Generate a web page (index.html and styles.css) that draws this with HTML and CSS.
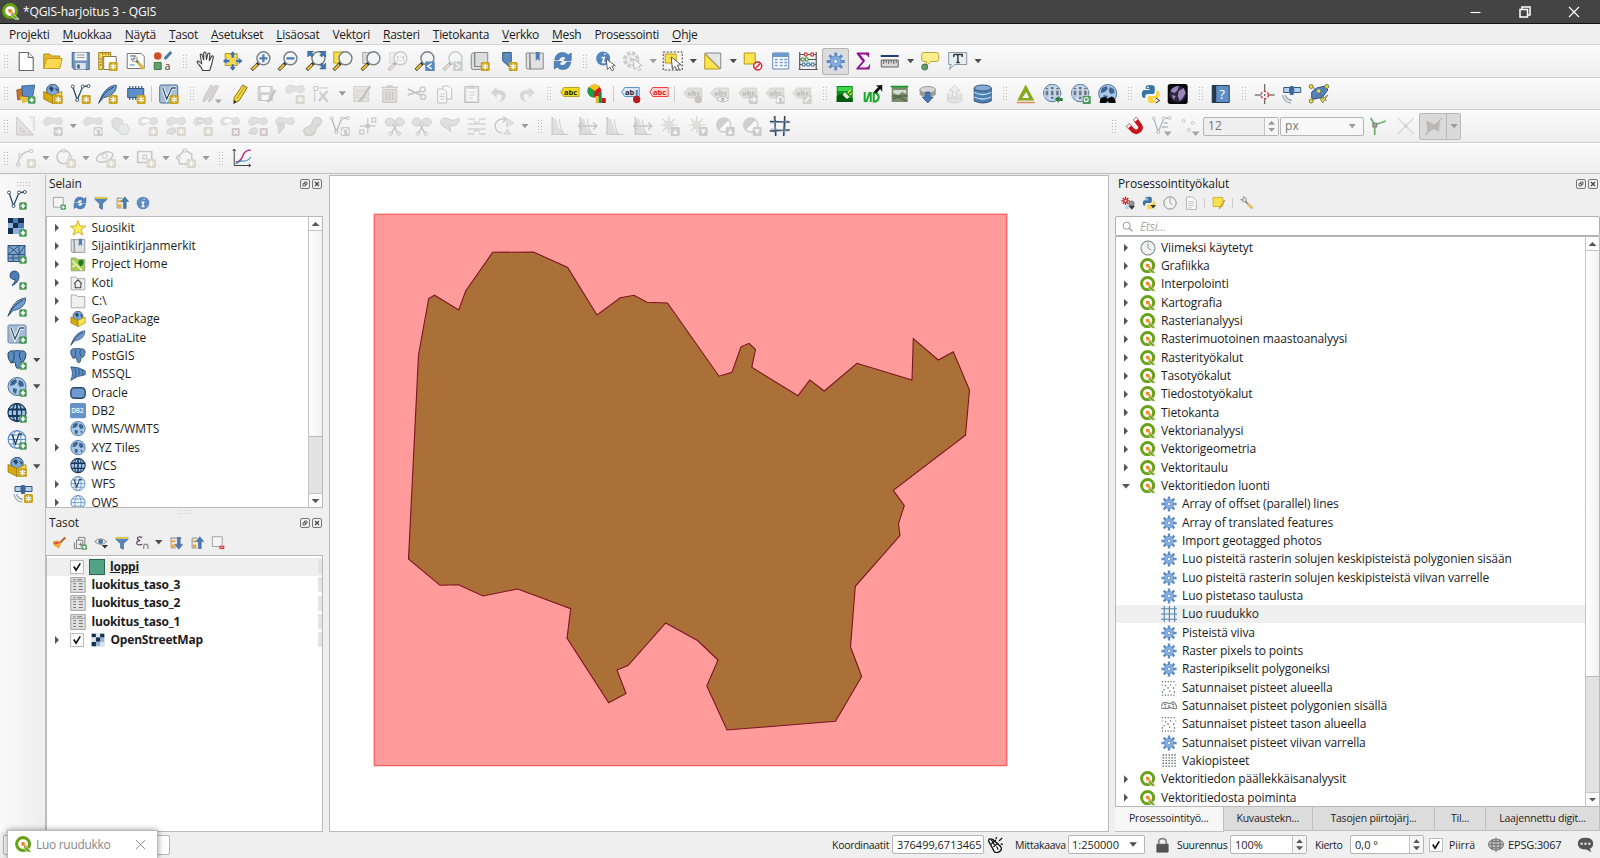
FILE: index.html
```html
<!DOCTYPE html>
<html lang="fi">
<head>
<meta charset="utf-8">
<title>*QGIS-harjoitus 3 - QGIS</title>
<link rel="stylesheet" href="styles.css">
</head>
<body>
<svg class="defs" width="0" height="0">
<defs>
<g id="bs"><rect x="11" y="11" width="9" height="9" rx="1.5" fill="#c9a21e"/><path d="M15.5 12.5v6M12.7 14l5.6 3M18.3 14l-5.6 3" stroke="#fff" stroke-width="1.3"/></g>
<g id="bp"><rect x="12.2" y="12.2" width="7.6" height="7.6" rx="1.5" fill="#4d9a5c"/><path d="M16 13.8v4.4M13.8 16h4.4" stroke="#fff" stroke-width="1.7"/></g>
<g id="bx"><rect x="12" y="12" width="8" height="8" rx="1" fill="#d66"/><path d="M14 14l4 4M18 14l-4 4" stroke="#fff" stroke-width="1.3"/></g>
<g id="ba"><rect x="11" y="11" width="9" height="9" rx="1.5" fill="#888"/><path d="M12.5 15.500h5M15.500 13l2.500 2.500-2.500 2.500" stroke="#fff" stroke-width="1.4" fill="none"/></g>
<g id="br"><rect x="11" y="11" width="9" height="9" rx="1.5" fill="#888"/><path d="M17.5 17.5a2.8 2.8 0 1 0-4 0M13.8 15.3v2.500h-2" stroke="#fff" stroke-width="1.3" fill="none"/></g>
<g id="up"><rect x="11" y="11" width="9" height="9" rx="1.5" fill="#888"/><path d="M15.5 13l2.6 5h-5.2z" fill="#fff"/></g>
<g id="dn"><rect x="11" y="11" width="9" height="9" rx="1.5" fill="#888"/><path d="M15.5 18.3l2.6-5h-5.2z" fill="#fff"/></g>
<g id="ptr"><path d="M10.5 8l1.2 10.5 2.4-2.3 2 3.6 2-1.1-2-3.5 3.4-.6z" fill="#fff" stroke="#555" stroke-width=".9"/></g>
<g id="blob"><path d="M1 5.5C1.500 1 6 .8 8.500 1.800S13 3 15.500 1.800 20 3 19.500 6 15 9.500 12.500 7.500 8 8 5.500 9 .8 8.500 1 5.500z" fill="#b4bab4" stroke="#8d948d" stroke-width=".8"/></g>
<g id="mag"><path d="M8 12L1 19" stroke="#333" stroke-width="3.200"/><path d="M6.500 13.500L1.500 18.500" stroke="#f2c02c" stroke-width="2"/><circle cx="12.700" cy="7.300" r="6.500" fill="#f3f5f5" stroke="#777f82" stroke-width="1.400"/></g>
<g id="vee"><path d="M2 2.500L6.500 16 12 2.500 17.500 2" fill="none" stroke="#2d4a63" stroke-width="1.300"/><g fill="#fff" stroke="#2d4a63" stroke-width=".9"><circle cx="2" cy="2.500" r="1.500"/><circle cx="6.500" cy="16" r="1.500"/><circle cx="12" cy="2.500" r="1.500"/><circle cx="17.800" cy="2" r="1.500"/></g></g>
<g id="feat"><path d="M1.500 18.500C4 10 9 2 18.500 1 19 6 16 12 6 13.500z" fill="#6e9bce" stroke="#33567c" stroke-width=".9"/><path d="M.8 19.500C4 12 9 6.500 16 3" stroke="#24405e" fill="none"/></g>
<g id="glb"><circle cx="10" cy="9.500" r="9" fill="#a9c7e6" stroke="#48719b"/><path d="M4 4l5-2 1 3-3 3-4 1zM12 3l4 2 1 4-4 1-2-3zM6 11l4 1-1 5-3-2zM13 12l3 1-2 3z" fill="#3c658f"/></g>
<g id="wire"><circle cx="10" cy="9.500" r="8.800" fill="#f1f6fb" stroke="#5d8fc2" stroke-width="1.200"/><ellipse cx="10" cy="9.500" rx="4" ry="8.800" fill="none" stroke="#5d8fc2"/><path d="M1.200 9.500h17.600M2.500 5h15M2.500 14h15" stroke="#5d8fc2"/></g>
<g id="wcs"><circle cx="10" cy="9.500" r="9" fill="#a4c4e6" stroke="#17375a" stroke-width="1.300"/><path d="M1 6.500h18M1.500 13h17M10 1v17" stroke="#17375a" stroke-width="1.800"/><ellipse cx="10" cy="9.500" rx="4.600" ry="9" fill="none" stroke="#17375a" stroke-width="1.200"/></g>
<g id="box"><circle cx="10" cy="6.500" r="6.200" fill="#7ea7d3" stroke="#33567c"/><path d="M6 4l3-2 2 3-2 3zM12 4l3 1v3z" fill="#27476b"/><path d="M1 7.500l9 4v8l-9-4.500z" fill="#d5a90f" stroke="#8f7008" stroke-width=".7"/><path d="M19 7.500l-9 4v8l9-4.500z" fill="#f8e24e" stroke="#8f7008" stroke-width=".7"/></g>
<g id="hist"><path d="M2.500 1v18" stroke="#777" stroke-width="1.500"/><path d="M3 18.500V3q4-2 5 5t9 10.500z" fill="#aebaae"/><path d="M2 18.500h17M9.500 3q1.500 12 4.500 15" stroke="#888" fill="none"/></g>
<g id="tag"><path d="M1 9l4.500-5H19v10H5.500z" fill="#b9bba8" stroke="#8c8e80" stroke-width=".8"/><path d="M5.500 9h2.500v2H6zM10 6v5h2.500V8.500H10M17 8.500h-2V11h2" fill="none" stroke="#555" stroke-width="1.200"/></g>
<g id="doc"><path d="M3.500 1.500h9l5 5v13h-14z" fill="#fff" stroke="#666" stroke-width="1.100"/><path d="M12.500 1.500v5h5" fill="#eee" stroke="#666"/></g>
<g id="satl"><path d="M2 3.500h6v5H2zM12 3.500h7v5h-7z" fill="#b3d0ec" stroke="#32587f"/><rect x="8" y="2" width="4" height="9" rx="1" fill="#3b6896"/><path d="M1 11q1 7 8 8M3.500 11q1 4.500 6.500 5.500" stroke="#9aa8b5" stroke-width="1.300" fill="none"/></g>
<g id="ele"><path d="M1 3q2-3 6-2 4-1 6 0 5-1 6 3 0 5-3 8l-2-1-1 6q-2 3-4 0l-1-5-4 1Q0 8 1 3z" fill="#5c8cc2" stroke="#27496f"/><path d="M7 2v7l-2 3M13 2q-2 5 1 8" stroke="#27496f" fill="none"/></g>
<g id="wgl"><circle cx="9.500" cy="9" r="8.700" fill="#c3d8ef" stroke="#54779e"/><path d="M4.300 4v9M9.500 3v12M14.700 4v8" stroke="#74747c" stroke-width="2.600"/><path d="M1 6h17M1 12h17" stroke="#c3d8ef" stroke-width="1.400"/></g>
<g id="pyt"><path d="M5 5V3q0-2 4.500-2T14 3v5q0 2-2 2H7q-2.500 0-2.500 2.500V14H3q-2-1-2-4t2-4h6V5z" fill="#3a75a8"/><path d="M7 17v-3q0-2 2-2h4q2.500 0 2.500-2.500V6.500H17q2 1 2 4t-2 4h-5v1h3v2q0 1.500-4 1.500t-4-2z" fill="#ffd343"/><circle cx="7.200" cy="3.300" r=".9" fill="#fff"/></g>
</defs>
<symbol id="qgis" viewBox="0 0 20 20"><circle cx="9.500" cy="9.500" r="7.600" fill="#fff" stroke="#68a116" stroke-width="3.600"/><path d="M11 10.500l9 8.500h-5l-5-5z" fill="#68a116" stroke="#fff" stroke-width=".9"/><path d="M7 7l5.500 1-1 1.300 3 3-2 2-3-3-1.500 1z" fill="#f0a052"/><circle cx="9.500" cy="9" r="1.600" fill="#ee7913"/></symbol>
<symbol id="new" viewBox="0 0 20 20"><use href="#doc"/></symbol>
<symbol id="open" viewBox="0 0 20 20"><path d="M1 17.500V3h6l2 2h8v3" fill="#e5b52b" stroke="#b98f1c"/><path d="M1 17.500L4 7.500h15.500L17 17.500z" fill="#fcd752" stroke="#c59c22"/></symbol>
<symbol id="save" viewBox="0 0 20 20"><path d="M1.500 1.500h17v17h-15l-2-2z" fill="#6d96c3" stroke="#44688f"/><path d="M4 1.500h12v8H4z" fill="#f4f4f4"/><path d="M6 4h8M6 6.500h8" stroke="#999"/><path d="M5 12h10v6.500H5z" fill="#dfe3e6"/><path d="M6.500 13.500h2.500v4H6.500z" fill="#3d5a7a"/></symbol>
<symbol id="lay" viewBox="0 0 20 20"><path d="M6 5.500h12.500v13H6z" fill="#fff" stroke="#777"/><path d="M1 1.500h12v4H5v13H1z" fill="#f5d45c" stroke="#a3851b"/><path d="M5 2v2M8 2v2M11 2v2M2 8h2M2 11h2M2 14h2" stroke="#8a6e10"/><use href="#bs"/></symbol>
<symbol id="man" viewBox="0 0 20 20"><path d="M1.500 2.500h14l3 3v12h-17z" fill="#fff" stroke="#777"/><path d="M4 5h6M4 14h5" stroke="#9ebbd8" stroke-width="2"/><path d="M12 11l6 7" stroke="#dcb944" stroke-width="3"/><path d="M12.500 11.500L8 7" stroke="#666" stroke-width="2.200"/><path d="M7 4.500L9.500 7 7.500 9 5.500 7q0 4 4 4 2-1 2-3 0-3-4.500-3.500z" fill="#eee" stroke="#777" stroke-width=".8"/></symbol>
<symbol id="sty" viewBox="0 0 20 20"><circle cx="5" cy="5" r="3.800" fill="#cf4f24"/><path d="M12 8L18.500 1" stroke="#4c78a8" stroke-width="3"/><path d="M1.500 11.500h7v7h-7z" fill="#63a36f" stroke="#3f7c4c"/></symbol>
<symbol id="hand" viewBox="0 0 20 20"><path d="M7 19.500q-1-3-4-6Q0 10 2.500 10L6 12.500 4.500 4q0-2 2 0l1.500 5L8 2q1-2 2.200 0l.5 7 1.500-6.500q1.500-1.200 2 .5L13.500 10l2.500-5q2-.5 1.500 1.500L16 13l-2 6.500z" fill="#fff" stroke="#444" stroke-width="1.100"/></symbol>
<symbol id="panto" viewBox="0 0 20 20"><path d="M2.500 2.500h12v12h-12z" fill="#f8d83c" stroke="#b8961a"/><path d="M10 0l3.500 4h-2v3h-3V4h-2zM10 20l3.500-4h-2v-3h-3v3h-2zM0 10l4-3.500v2h3v3H4v2zM20 10l-4-3.500v2h-3v3h3v2z" fill="#3d6fa6" stroke="#fff" stroke-width=".4"/></symbol>
<symbol id="zin" viewBox="0 0 20 20"><use href="#mag"/><path d="M12.700 3.300v8M8.700 7.300h8" stroke="#4c7cb5" stroke-width="2.200"/></symbol>
<symbol id="zout" viewBox="0 0 20 20"><use href="#mag"/><path d="M8.700 7.300h8" stroke="#4c7cb5" stroke-width="2.200"/></symbol>
<symbol id="zful" viewBox="0 0 20 20"><use href="#mag"/><path d="M2 0h6L6 2l2 2-2 2-2-2-2 2zM20 0h-6l2 2-2 2 2 2 2-2 2 2zM20 18h-6l2-2-2-2 2-2 2 2 2-2z" fill="#4677ab" stroke="#2b4f79" stroke-width=".5"/></symbol>
<symbol id="zsel" viewBox="0 0 20 20"><path d="M1 1h10v11H1z" fill="#f7df4a" stroke="#b8a01a"/><use href="#mag"/></symbol>
<symbol id="zlay" viewBox="0 0 20 20"><path d="M2 1.500h9v11H2z" fill="#ddd" stroke="#aaa"/><use href="#mag"/></symbol>
<symbol id="zlast" viewBox="0 0 20 20"><use href="#mag"/><rect x="10.500" y="10.500" width="9.500" height="9.500" fill="#5b88bb"/><path d="M17 12.500l-4 2.700 4 2.700" stroke="#fff" stroke-width="1.500" fill="none"/></symbol>
<symbol id="znext" viewBox="0 0 20 20"><use href="#mag"/><rect x="10.500" y="10.500" width="9.500" height="9.500" fill="#7a8a9b"/><path d="M13 12.500l4 2.700-4 2.700" stroke="#fff" stroke-width="1.500" fill="none"/></symbol>
<symbol id="nmap" viewBox="0 0 20 20"><path d="M5 1.500h13v14H5zM5 1.500q-3.500 0-3.500 3v12q0 2 2 2H15v-3H5z" fill="#dcdddd" stroke="#888"/><use href="#bs"/></symbol>
<symbol id="nbm" viewBox="0 0 20 20"><path d="M5 1.500h8.500v16L9 13.500 5 10z" fill="#5d8cc0" stroke="#34587f"/><use href="#bs"/></symbol>
<symbol id="bms" viewBox="0 0 20 20"><path d="M5 2h13.500v16H5zM5 2H1.500v14.500q0 1.500 2 1.500H6z" fill="#e0e1e2" stroke="#8a8a8a"/><path d="M11 1h4v9l-2-2-2 2z" fill="#4d7eb3"/></symbol>
<symbol id="ref" viewBox="0 0 20 20"><path d="M2 9Q3 1.500 10 1.500q3.500 0 5.500 2.500L18.500 2v7.500H11L13.500 7Q9 3 6 9z" fill="#4f86c2" stroke="#2f5f95" stroke-width=".6"/><path d="M18 11q-1 7.500-8 7.500-3.500 0-5.500-2.500L1.500 18v-7.500H9L6.500 13q4.500 4 7.500-2z" fill="#4f86c2" stroke="#2f5f95" stroke-width=".6"/></symbol>
<symbol id="iden" viewBox="0 0 20 20"><circle cx="7.500" cy="7.500" r="7" fill="#4f86c2"/><path d="M9.200 3h.1M6.500 6.500h2L7 11.500h2" fill="none" stroke="#fff" stroke-width="1.700" stroke-linecap="round"/><use href="#ptr"/></symbol>
<symbol id="act" viewBox="0 0 20 20"><circle cx="8.500" cy="8.500" r="6.500" fill="none" stroke="#888" stroke-width="3.500" stroke-dasharray="3.500 1.600"/><circle cx="8.500" cy="8.500" r="5" fill="#eee" stroke="#888"/><path d="M7 5.500l5 3-5 3z" fill="#888"/><use href="#ptr"/></symbol>
<symbol id="selr" viewBox="0 0 20 20"><path d="M.5 1h19v18H.5z" fill="none" stroke="#444" stroke-dasharray="2 1.500"/><path d="M2.500 3h11v9h-11z" fill="#f9e14d" stroke="#b9a11c"/><path d="M8.500 6l1.200 12 2.700-2.600 2 4 2.200-1.200-2-3.900 3.600-.6z" fill="#fff" stroke="#444" stroke-width=".9"/></symbol>
<symbol id="inv" viewBox="0 0 20 20"><path d="M2 2h16v16z" fill="#e4e4e4" stroke="#888"/><path d="M2 3v15h15z" fill="#fbe44f" stroke="#b29a18"/></symbol>
<symbol id="desl" viewBox="0 0 20 20"><path d="M1.500 2h11v11h-11z" fill="#fbe44f" stroke="#b29a18"/><circle cx="15" cy="15" r="4" fill="#fff" stroke="#d8232c" stroke-width="1.500"/><path d="M12.500 17.500l5-5" stroke="#d8232c" stroke-width="1.500"/></symbol>
<symbol id="tabl" viewBox="0 0 20 20"><path d="M2 2h16v16H2z" fill="#fff" stroke="#5b83b0"/><path d="M2 2h16v4H2z" fill="#6d9bcf"/><path d="M4 8.500h3M9 8.500h3M13.500 8.500h3M4 11.500h3M9 11.500h3M13.500 11.500h3M4 14.500h3M9 14.500h3M13.500 14.500h3" stroke="#6d9bcf" stroke-width="1.400"/></symbol>
<symbol id="abac" viewBox="0 0 20 20"><path d="M2 1v17.500M18.500 1v17.500M2 3.500h16.500M2 8.500h16.500M2 13.500h16.500M1 18.500h19" stroke="#555" stroke-width="1.200"/><g fill="#fff" stroke-width="1.200"><g stroke="#c33"><circle cx="8" cy="3.500" r="1.600"/><circle cx="14.500" cy="3.500" r="1.600"/></g><g stroke="#4a9a4a"><circle cx="5" cy="8.500" r="1.600"/><circle cx="9" cy="8.500" r="1.600"/></g><g stroke="#4a7ab0"><circle cx="6" cy="13.500" r="1.600"/><circle cx="10.500" cy="13.500" r="1.600"/><circle cx="15" cy="13.500" r="1.600"/></g></g></symbol>
<symbol id="gear" viewBox="0 0 20 20"><path d="M10 .5v19M.5 10h19M3.300 3.300l13.400 13.400M16.700 3.300L3.300 16.700" stroke="#5b8cc6" stroke-width="3"/><circle cx="10" cy="10" r="5.800" fill="#8ab0de" stroke="#5b8cc6"/><circle cx="10" cy="10" r="2.300" fill="#e8eef5" stroke="#5b8cc6"/></symbol>
<symbol id="sig" viewBox="0 0 20 20"><path d="M4 1.500h12.500v4.500h-1q-.5-2.500-3-2.500H7.500l5 6.300-5.800 6.700h6.300q3 0 3.500-3h1l-.8 5H3.700v-1.200l6-7L4 3z" fill="#930f93"/></symbol>
<symbol id="rul" viewBox="0 0 20 20"><path d="M1 5h18" stroke="#1c3f7d" stroke-width="1.800"/><path d="M1.500 9h17v7h-17z" fill="#d8d8d8" stroke="#666"/><path d="M4 9v4M6.500 9v3M9 9v4M11.500 9v3M14 9v4M16.500 9v3" stroke="#555" stroke-width=".9"/></symbol>
<symbol id="tip" viewBox="0 0 20 20"><path d="M4 1.500h13q2 0 2 2v5q0 2-2 2h-6l-5 5 1-5H4q-2 0-2-2v-5q0-2 2-2z" fill="#fbee8c" stroke="#b9a93c"/><circle cx="5" cy="16" r="3" fill="#6a9e6a" stroke="#3e6e4a"/></symbol>
<symbol id="txt" viewBox="0 0 20 20"><path d="M1 1.500h18v12H7L1.500 18.500 3.500 13.500H1z" fill="#e6eef4" stroke="#8a98a5"/><path d="M6 3.500h8.500v2.500M6 6V3.500M10.200 3.500v8M8.500 11.500h3.500" stroke="#333" stroke-width="1.400" fill="none"/></symbol>
<symbol id="dsm" viewBox="0 0 20 20"><path d="M1 6l8-2 2 9-9 3z" fill="#c8732a" stroke="#7d4310" stroke-width=".7"/><path d="M4 13l8-2 1 6-6 2.500z" fill="#e8c23e"/><path d="M6 2l13-1-2 12-10-1z" fill="#5a8bc4" stroke="#2f5784" stroke-width=".8"/><use href="#bp"/></symbol>
<symbol id="gpk" viewBox="0 0 20 20"><use href="#box"/></symbol>
<symbol id="gpks" viewBox="0 0 20 20"><use href="#box"/><use href="#bs"/></symbol>
<symbol id="vees" viewBox="0 0 20 20"><use href="#vee"/><use href="#bs"/></symbol>
<symbol id="veep" viewBox="0 0 20 20"><use href="#vee"/><use href="#bp"/></symbol>
<symbol id="fea" viewBox="0 0 20 20"><use href="#feat"/></symbol>
<symbol id="feas" viewBox="0 0 20 20"><use href="#feat"/><use href="#bs"/></symbol>
<symbol id="feap" viewBox="0 0 20 20"><use href="#feat"/><use href="#bp"/></symbol>
<symbol id="mem" viewBox="0 0 20 20"><path d="M4 2v14M7 2v14M10 2v14M13 2v14M16 2v14" stroke="#34587f" stroke-width="1.200"/><path d="M2 4.500h16v9H2z" fill="#5f8fc8" stroke="#34587f"/><use href="#bs"/></symbol>
<symbol id="virs" viewBox="0 0 20 20"><rect x="1" y="1" width="18" height="18" rx="1.500" fill="#a6c0db" stroke="#4b6d91"/><path d="M4 4l4 11 5-11h4" fill="none" stroke="#fff" stroke-width="3"/><path d="M4 4l4 11 5-11h4" fill="none" stroke="#33506e" stroke-width="1.300"/><use href="#bs"/></symbol>
<symbol id="virp" viewBox="0 0 20 20"><rect x="1" y="1" width="18" height="18" rx="1.500" fill="#a6bdd6" stroke="#6d88a5"/><path d="M4 4l4 11 5-11h4" fill="none" stroke="#fff" stroke-width="3"/><path d="M4 4l4 11 5-11h4" fill="none" stroke="#33506e" stroke-width="1.300"/><use href="#bp"/></symbol>
<symbol id="pens" viewBox="0 0 20 20"><path d="M9 1l3 1.500-7 13L1.500 18 2 14zM14 1l3 1.500-7 13-3 2.500.5-4z" fill="#a99" stroke="#876"/><path d="M13 15.500h7L16.500 19.500z" fill="#222"/></symbol>
<symbol id="pen" viewBox="0 0 20 20"><path d="M13 1l4.500 2.500-8 13L4 19.500l.5-6z" fill="#f3d83a" stroke="#857213"/><path d="M15 2.500L7 15" stroke="#b5952a"/><path d="M4 19.500l.3-3.500 2.700 1.700z" fill="#333"/></symbol>
<symbol id="svl" viewBox="0 0 20 20"><path d="M1.500 2.500h14v14h-14z" fill="#999" stroke="#777"/><path d="M4 3h9v5H4zM5 11h7v5H5z" fill="#fff"/><path d="M18.500 6l-5 9-3 3" stroke="#866" stroke-width="2.500" fill="none"/></symbol>
<symbol id="blbs" viewBox="0 0 20 20"><use href="#blob"/><use href="#bs"/></symbol>
<symbol id="vtx" viewBox="0 0 20 20"><path d="M4 4h12M3 4v14" stroke="#777"/><path d="M2 2.500h4v4H2z" fill="#eee" stroke="#777"/><path d="M8 8l8 10M16 7L7 17" stroke="#988" stroke-width="2.400"/></symbol>
<symbol id="mod" viewBox="0 0 20 20"><path d="M2 2.500h15v4H2zM2 8h15v4H2zM2 13.500h15v4H2z" fill="#ccc8bc" stroke="#998" stroke-width="1.200"/><path d="M18.500 2L10 15l-3 2" stroke="#866" stroke-width="2.500" fill="none"/></symbol>
<symbol id="tra" viewBox="0 0 20 20"><path d="M3 5.500h14v13H3z" fill="#caa" stroke="#977"/><path d="M1.500 3.500h17M7 2h6M7 8v8M10 8v8M13 8v8" stroke="#977" stroke-width="1.500"/></symbol>
<symbol id="cut" viewBox="0 0 20 20"><path d="M1 5l13 6M1 11L14 7" stroke="#666" stroke-width="1.800"/><circle cx="16" cy="5.500" r="2.500" fill="none" stroke="#977" stroke-width="1.500"/><circle cx="16.500" cy="13" r="2.500" fill="none" stroke="#977" stroke-width="1.500"/></symbol>
<symbol id="cpy" viewBox="0 0 20 20"><path d="M8 2h6l3 3v10H8z" fill="#fff" stroke="#666"/><path d="M3 5h6l3 3v11H3z" fill="#fff" stroke="#666"/><path d="M5 10h5M5 12.500h5M5 15h5" stroke="#888"/></symbol>
<symbol id="pst" viewBox="0 0 20 20"><path d="M3 2.500h14v16H3z" fill="#bbb" stroke="#666"/><path d="M5 5h10v12H5z" fill="#fff"/><path d="M7 1.500h6v3H7z" fill="#888"/><path d="M7 8h6M7 11h6M7 14h4" stroke="#888"/></symbol>
<symbol id="und" viewBox="0 0 20 20"><path d="M8 3L2 8.500 8 14v-3.500q6-1 5 3 0 2-3 4.500 7-1 7-6.500 0-5.500-9-5.500z" fill="#a99"/></symbol>
<symbol id="red" viewBox="0 0 20 20"><path d="M12 3l6 5.500L12 14v-3.500q-6-1-5 3 0 2 3 4.500-7-1-7-6.500Q3 6 12 6z" fill="#9a9"/></symbol>
<symbol id="laby" viewBox="0 0 20 20"><path d="M1 8l3-4.500h15.500v9H4z" fill="#f4da1c" stroke="#a68f0d" stroke-width=".8"/></symbol>
<symbol id="labr" viewBox="0 0 20 20"><path d="M1 8l3-4.500h15.500v9H4z" fill="#ffd3d3" stroke="#ff3c3c"/></symbol>
<symbol id="dia" viewBox="0 0 20 20"><circle cx="8" cy="7" r="6.500" fill="#d8161b"/><path d="M8 7L2 3a6.500 6.500 0 0 0 5 10.500z" fill="#15a14a"/><path d="M8 7L2.500 3A6.500 6.500 0 0 1 13 3z" fill="#f2c617"/><path d="M9 12h3v7H9z" fill="#f4b41a"/><path d="M12 8h3v11h-3z" fill="#0d9440"/><path d="M15 14h4v5h-4z" fill="#c4161c"/></symbol>
<symbol id="labp" viewBox="0 0 20 20"><path d="M1 8l3-4.500h14.500v9H4z" fill="#d5e6f7" stroke="#5d8fc8"/><path d="M16 6v7" stroke="#5d7fb0" stroke-width="2"/><circle cx="16" cy="15.500" r="3.700" fill="#b01c22"/></symbol>
<symbol id="lg1" viewBox="0 0 20 20"><use href="#tag"/><circle cx="15.500" cy="15.500" r="3.800" fill="#a66"/></symbol>
<symbol id="lg2" viewBox="0 0 20 20"><use href="#tag"/><path d="M7 15.500q6-6 12 0-6 5-12 0z" fill="#fff" stroke="#555"/><circle cx="13" cy="15.300" r="1.700" fill="#555"/></symbol>
<symbol id="lg3" viewBox="0 0 20 20"><use href="#tag"/><use href="#ba"/></symbol>
<symbol id="lg4" viewBox="0 0 20 20"><use href="#tag"/><use href="#br"/></symbol>
<symbol id="lg5" viewBox="0 0 20 20"><use href="#tag"/><rect x="11" y="11" width="9" height="9" fill="#998"/><path d="M13 18l4.500-5" stroke="#fff" stroke-width="1.800"/></symbol>
<symbol id="plug" viewBox="0 0 20 20"><path d="M2 2h16v16H2z" fill="#0a8f1c"/><path d="M3 3h14v4H3z" fill="#3bd44b"/><path d="M2 12q5-4 9 0t7 2v4H2z" fill="#035a0e"/><path d="M10 8l5 5-3 2-4-4z" fill="#e9e9d0"/><path d="M13 9l3-3M15 11l2-2" stroke="#f4e04c" stroke-width="1.400"/></symbol>
<symbol id="wd" viewBox="0 0 20 20"><path d="M2 8v10M7 8L3.500 18M8 8v10M11 9v8.500h2q3-1 3-4.200T13 9z" fill="none" stroke="#19a62b" stroke-width="2"/><path d="M11 8l4.500-5-2.500-1.500L19.500 1v7L17.500 5 13.500 9.500z" fill="#111"/></symbol>
<symbol id="pic" viewBox="0 0 20 20"><path d="M2 2h16v16H2z" fill="#7a8a6a"/><path d="M1 2.500h17.500" stroke="#0b9a25" stroke-width="1.700"/><path d="M3.500 6h13v4l-4-2-4 3-5-2z" fill="#d4dcd4"/><path d="M2 12h16M3 15l6-2 8 4" stroke="#5a6a4c" stroke-width="1.700" fill="none"/></symbol>
<symbol id="dbd" viewBox="0 0 20 20"><ellipse cx="10" cy="6" rx="8" ry="3.500" fill="#d6d6d6" stroke="#999"/><path d="M2 6v5q8 4 16 0V6q-8 5-16 0z" fill="#9a9a9a"/><path d="M8 8h4v5h3.500L10 19l-5.500-6H8z" fill="#4479b5" stroke="#284f7e" stroke-width=".7"/></symbol>
<symbol id="dbu" viewBox="0 0 20 20"><path d="M3 9v8q7 4 14 0V9" fill="#ccc" stroke="#999"/><path d="M3 13q7 4 14 0" stroke="#999" fill="none"/><path d="M8 13h4V7h3.500L10 1 4.500 7H8z" fill="#ddd" stroke="#999"/></symbol>
<symbol id="db" viewBox="0 0 20 20"><path d="M1.500 4v13q8.500 4 17 0V4" fill="#4d7eb3" stroke="#34587f"/><ellipse cx="10" cy="4" rx="8.500" ry="3" fill="#86abd6" stroke="#34587f"/><path d="M1.500 8.500q8.500 4 17 0M1.500 13q8.500 4 17 0" stroke="#c3d7ec" fill="none" stroke-width="1.300"/></symbol>
<symbol id="grs" viewBox="0 0 20 20"><path d="M10 .5l8.500 16h-17zM10.500 8l-4 6h7z" fill="#86a91c" fill-rule="evenodd"/><path d="M1 18.500h18" stroke="#e88b5a" stroke-width="1.500"/></symbol>
<symbol id="wg1" viewBox="0 0 20 20"><use href="#wgl"/><path d="M12 15l4-3v2h4v3h-4v2z" fill="#2f7d3f"/></symbol>
<symbol id="wg2" viewBox="0 0 20 20"><use href="#wgl"/><path d="M12 12h8v8h-8z" fill="#4a9a5a"/><circle cx="15.500" cy="15.500" r="2" fill="none" stroke="#fff" stroke-width="1.200"/></symbol>
<symbol id="wg3" viewBox="0 0 20 20"><use href="#glb"/><path d="M2 19q0-6 4-6 3 0 4 2 1-2 4-2 4 0 4 6h-6l-2-2-2 2z" fill="#0b0b0b"/></symbol>
<symbol id="pyc" viewBox="0 0 20 20"><use href="#pyt"/><path d="M15 14l4 2.500-4 2.500" stroke="#333" fill="none"/></symbol>
<symbol id="pyd" viewBox="0 0 20 20"><use href="#pyt"/><path d="M12 13h8l-4 5z" fill="#333"/></symbol>
<symbol id="moon" viewBox="0 0 20 20"><rect x="0" y="0" width="20" height="20" rx="2.500" fill="#0a0a0e"/><circle cx="10" cy="10" r="8.300" fill="#30263f"/><path d="M3 6q4-4 8-4l-1 4-3 3-3-1zM11 7l5-3 2 5-3 5-3 3-2-5zM4 11l4 1-2 4z" fill="#9a88ba"/></symbol>
<symbol id="help" viewBox="0 0 20 20"><path d="M1.500 1.500h17v17h-17z" fill="#5d8fc6" stroke="#2a3f55"/><path d="M1.500 1.500h4v17h-4z" fill="#24384c"/></symbol>
<symbol id="crs" viewBox="0 0 20 20"><path d="M10 0v7M10 14v6M0 11h6.500M13.500 11H20M10 10v2" stroke="#444"/><circle cx="10" cy="11" r="3.700" fill="none" stroke="#d33" stroke-width="1.300" stroke-dasharray="2.500 1.500"/></symbol>
<symbol id="sat" viewBox="0 0 20 20"><use href="#satl"/></symbol>
<symbol id="sats" viewBox="0 0 20 20"><use href="#satl"/><use href="#bs"/></symbol>
<symbol id="topo" viewBox="0 0 20 20"><path d="M3 14V8l5-4 9-2 2 4-5 7-8 2z" fill="#5486bf" stroke="#2b4e78"/><path d="M3 2l15 15M3 17L18 2" stroke="#666"/><circle cx="2.500" cy="2.500" r="2" fill="#f4de35" stroke="#776"/><circle cx="18" cy="2.500" r="2" fill="#f4de35" stroke="#776"/><circle cx="2.500" cy="17" r="2" fill="#f4de35" stroke="#776"/><circle cx="10" cy="7" r="1.700" fill="#f4de35"/><path d="M11 14l3 5 5-8-5 4z" fill="#f4de35" stroke="#886"/></symbol>
<symbol id="tri" viewBox="0 0 20 20"><path d="M1 1v18h17z M5 11v4.500h4z" fill="#cbb" fill-rule="evenodd" stroke="#977"/><path d="M14 1h4.500v14" fill="#ddd" stroke="#999"/></symbol>
<symbol id="b1" viewBox="0 0 20 20"><use href="#blob"/><use href="#ba"/></symbol>
<symbol id="b2" viewBox="0 0 20 20"><use href="#blob"/><use href="#br"/></symbol>
<symbol id="b3" viewBox="0 0 20 20"><path d="M1 6q1-5 6-4t5 4-2 7-8-2z" fill="#b8bcb8" stroke="#8d948d"/><path d="M10 8h6l3 5-3 5.500h-6L7 13z" fill="#ccd4da" stroke="#9aa2aa"/></symbol>
<symbol id="b4" viewBox="0 0 20 20"><use href="#blob"/><ellipse cx="8" cy="5" rx="4" ry="2" fill="#fff"/><use href="#bs"/></symbol>
<symbol id="b5" viewBox="0 0 20 20"><use href="#blob"/><path d="M1 17q1-6 8-5 2 5-2 6.500z" fill="#b4bab4" stroke="#8d948d"/><use href="#bs"/></symbol>
<symbol id="b6" viewBox="0 0 20 20"><use href="#blob"/><ellipse cx="8" cy="5" rx="4" ry="2" fill="#d0d4d0" stroke="#888"/><use href="#bs"/></symbol>
<symbol id="b7" viewBox="0 0 20 20"><use href="#blob"/><ellipse cx="8" cy="5" rx="4" ry="2" fill="#fff"/><use href="#bx"/></symbol>
<symbol id="b8" viewBox="0 0 20 20"><use href="#blob"/><path d="M1 17q1-6 8-5 2 5-2 6.500z" fill="#b4bab4" stroke="#8d948d"/><use href="#bx"/></symbol>
<symbol id="b9" viewBox="0 0 20 20"><use href="#blob"/><path d="M3 8l1 10 6-7-1-4z" fill="#b4a89a" stroke="#998"/></symbol>
<symbol id="b10" viewBox="0 0 20 20"><path d="M2 18q-3-5 3-7 4-1 5-6 2-5 7-3 4 3 0 7-3 2-4 5-2 6-7 6-3 0-4-2z" fill="#aeb0aa" stroke="#8b8d86" stroke-width="1.300"/></symbol>
<symbol id="b11" viewBox="0 0 20 20"><use href="#vee"/><use href="#br"/></symbol>
<symbol id="b12" viewBox="0 0 20 20"><path d="M10 2v16M2 10h16M14 2h4v4h-4zM2 14h4v4H2z" fill="none" stroke="#888" stroke-width="1.300"/><path d="M8 8h4v4H8z" fill="#777"/></symbol>
<symbol id="b13" viewBox="0 0 20 20"><ellipse cx="5" cy="6" rx="4.500" ry="4" fill="#b4bab4" stroke="#888"/><ellipse cx="15" cy="6" rx="4.500" ry="4" fill="#b4bab4" stroke="#888"/><path d="M8 8l5 9M12 8l-5 9" stroke="#666" stroke-width="1.300"/><circle cx="6" cy="17.500" r="1.700" fill="none" stroke="#966"/><circle cx="14" cy="17.500" r="1.700" fill="none" stroke="#966"/></symbol>
<symbol id="b14" viewBox="0 0 20 20"><path d="M1 5q3-5 8-2t10-1q1 5-3 7-4 1-6 1l1 6-4-4q-6-1-6-7z" fill="#b4bab4" stroke="#888"/></symbol>
<symbol id="b15" viewBox="0 0 20 20"><path d="M1 3h7M12 3h7M1 8h18M1 13h18M1 18h7M12 18h7M7 5l3 3 3-3M7 16l3-3 3 3" stroke="#999" stroke-width="1.500" fill="none"/></symbol>
<symbol id="b16" viewBox="0 0 20 20"><path d="M7 17A7 7 0 0 1 8 3h3M8 0l3.500 3L8 6.500" fill="none" stroke="#777" stroke-width="1.300"/><path d="M12 2l7 5-7 4zM9 18l4-5 3 5z" fill="#bcc4bc" stroke="#999"/></symbol>
<symbol id="h1" viewBox="0 0 20 20"><use href="#hist"/></symbol>
<symbol id="h2" viewBox="0 0 20 20"><use href="#hist"/><path d="M1 10h17M15.500 6.500L19 10l-3.500 3.500M4.500 6.500L1 10l3.500 3.500" stroke="#777" stroke-width="1.600" fill="none"/></symbol>
<symbol id="sn1" viewBox="0 0 20 20"><path d="M9 0v17M1 9h17M3 3l12 12M15 3L3 15" stroke="#997" stroke-width="1.200"/><circle cx="9" cy="9" r="4.500" fill="#bbb59a"/><use href="#up"/></symbol>
<symbol id="sn2" viewBox="0 0 20 20"><path d="M9 0v17M1 9h17M3 3l12 12M15 3L3 15" stroke="#997" stroke-width="1.200"/><circle cx="9" cy="9" r="4.500" fill="#bbb59a"/><use href="#dn"/></symbol>
<symbol id="co1" viewBox="0 0 20 20"><circle cx="9" cy="9" r="7" fill="#fff" stroke="#888" stroke-width="1.500"/><path d="M4 14A7 7 0 0 1 14 4z" fill="#888"/><use href="#up"/></symbol>
<symbol id="co2" viewBox="0 0 20 20"><circle cx="9" cy="9" r="7" fill="#fff" stroke="#888" stroke-width="1.500"/><path d="M4 14A7 7 0 0 1 14 4z" fill="#888"/><use href="#dn"/></symbol>
<symbol id="hash" viewBox="0 0 20 20"><path d="M5 0l1 20M15 0l-1 20M0 5.500l20 .5M0 15l20-1" stroke="#2e3f4e" stroke-width="1.500" fill="none"/><path d="M4 1l3 18M16 2l-1 17M1 7l18-2M1 13l18 2" stroke="#6f98bf" stroke-width=".8"/></symbol>
<symbol id="mgn" viewBox="0 0 20 20"><path d="M3 9l6 6q3 2 5.500-.5T15 9L11 4" fill="none" stroke="#c8141b" stroke-width="4.500"/><path d="M1.500 10.500l3-3 2 2-3 3zM8.500 4l3-3 2 2-3 3z" fill="#fff" stroke="#b33" stroke-width=".7"/></symbol>
<symbol id="snv" viewBox="0 0 20 20"><use href="#vee"/><path d="M12 7l4 0M10 11h6" stroke="#777" stroke-width="2"/><path d="M12 15.500h8L16 20z" fill="#222"/></symbol>
<symbol id="snp" viewBox="0 0 20 20"><g fill="none" stroke="#777"><circle cx="4" cy="5" r="1.500"/><circle cx="13" cy="7" r="1.500"/><circle cx="9" cy="14" r="1.500"/></g><path d="M12 15.500h8L16 20z" fill="#222"/></symbol>
<symbol id="tre" viewBox="0 0 20 20"><path d="M3 2l4 7v10M7 9l11-4" fill="none" stroke="#6db36d" stroke-width="1.800"/><rect x="5.200" y="7.200" width="3.800" height="3.800" fill="#aaa" stroke="#777"/></symbol>
<symbol id="xx" viewBox="0 0 20 20"><path d="M2 2l16 16M18 2L2 18" stroke="#a9aea9" stroke-width="1.500"/><circle cx="10" cy="10" r="2" fill="#999"/></symbol>
<symbol id="trc" viewBox="0 0 20 20"><path d="M3 4l5 3q4 2 8-4l-1 12-4-2q-3-1-7 4z" fill="#8a8262"/><path d="M2 18L18 2" stroke="#777"/></symbol>
<symbol id="s1" viewBox="0 0 20 20"><path d="M2 18Q3 4 15 3" fill="none" stroke="#777" stroke-width="1.300"/><path d="M1 15h3v3H1zM3 6h3v3H3zM14 1.500h3v3h-3z" fill="#eee" stroke="#777"/><use href="#bs"/></symbol>
<symbol id="s2" viewBox="0 0 20 20"><circle cx="8" cy="9" r="6.800" fill="none" stroke="#777" stroke-width="1.500"/><path d="M6.500 1h3v3h-3zM13 8h3v3h-3z" fill="#eee" stroke="#777"/><use href="#bs"/></symbol>
<symbol id="s3" viewBox="0 0 20 20"><ellipse cx="9" cy="9" rx="8.500" ry="4.500" transform="rotate(-20 9 9)" fill="none" stroke="#777" stroke-width="1.500"/><circle cx="9" cy="8" r="2.500" fill="none" stroke="#777"/><use href="#bs"/></symbol>
<symbol id="s4" viewBox="0 0 20 20"><path d="M2 3.500h14v11H2z" fill="none" stroke="#777" stroke-width="1.700"/><path d="M7 7h4v4H7z" fill="#eee" stroke="#777"/><use href="#bs"/></symbol>
<symbol id="s5" viewBox="0 0 20 20"><path d="M9 2l7 4v7l-5 3H4L2 9z" fill="none" stroke="#777" stroke-width="1.500"/><path d="M7.500 1h3v3h-3zM1 8h3v3H1z" fill="#eee" stroke="#777"/><use href="#bs"/></symbol>
<symbol id="plot" viewBox="0 0 20 20"><path d="M2.500 1v16.500H19M1 3l1.500-2L4 3M17 16l2 1.500L17 19" stroke="#444" fill="none"/><path d="M4 14q5 0 7-6t8-6" stroke="#b72a8b" stroke-width="1.500" fill="none"/><path d="M4 16q5-4 8-3t7-4" stroke="#3c9ab0" stroke-width="1.200" fill="none"/></symbol>
<symbol id="ras" viewBox="0 0 20 20"><path d="M1 1h16v16H1z" fill="#8fb2da"/><path d="M1 1h5v5H1zM11 1h6v5h-6zM6 6h5v5H6zM1 11h5v6H1z" fill="#14304f"/><path d="M6 1h5v5H6zM11 6h6v5h-6z" fill="#4f7cae"/><use href="#bp"/></symbol>
<symbol id="osm" viewBox="0 0 20 20"><path d="M1 1h18v18H1z" fill="#9ab4d4"/><path d="M1 1h6v5H1zM13 1h6v5h-6zM7 6h6v6H7zM1 13h6v6H1z" fill="#14304f"/><path d="M7 1h6v5H7zM1 6h6v7H1zM13 13h6v6h-6z" fill="#d7e3f0"/></symbol>
<symbol id="msh" viewBox="0 0 20 20"><path d="M1 1.500h17v16H1z" fill="#7ea4ce" stroke="#2f5379"/><path d="M1 1.500l11 9 6-9M1 10.500h17M12 1.500v16M1 10.500l11-9M6 10.500v7M1 14h11" stroke="#2f5379" fill="none"/><use href="#bp"/></symbol>
<symbol id="com" viewBox="0 0 20 20"><path d="M3 5.500q0-4 4-4.500 5 0 5 5.500 0 6-7 9 4-4 3-6-5 0-5-4z" fill="#4d7eb3" stroke="#284f7e"/><use href="#bp"/></symbol>
<symbol id="pg" viewBox="0 0 20 20"><use href="#ele"/></symbol>
<symbol id="pgp" viewBox="0 0 20 20"><use href="#ele"/><use href="#bp"/></symbol>
<symbol id="glo" viewBox="0 0 20 20"><use href="#glb"/></symbol>
<symbol id="glop" viewBox="0 0 20 20"><use href="#glb"/><use href="#bp"/></symbol>
<symbol id="wc" viewBox="0 0 20 20"><use href="#wcs"/></symbol>
<symbol id="wcp" viewBox="0 0 20 20"><use href="#wcs"/><use href="#bp"/></symbol>
<symbol id="wf" viewBox="0 0 20 20"><use href="#wire"/><path d="M5 4l3.500 10L12 4h3" stroke="#24405e" stroke-width="1.300" fill="none"/></symbol>
<symbol id="wfp" viewBox="0 0 20 20"><use href="#wire"/><path d="M5 4l3.500 10L12 4h3" stroke="#24405e" stroke-width="1.300" fill="none"/><use href="#bp"/></symbol>
<symbol id="ow" viewBox="0 0 20 20"><use href="#wire"/></symbol>
<symbol id="addl" viewBox="0 0 20 20"><path d="M2 2h14v14H2z" fill="#f4f4f4" stroke="#888"/><use href="#bp"/></symbol>
<symbol id="reml" viewBox="0 0 20 20"><path d="M2 1h14v14H2z" fill="#f4f4f4" stroke="#888"/><path d="M12 14h7v4.500h-7z" fill="#dc2d3c"/><path d="M13.500 16.200h4" stroke="#fff"/></symbol>
<symbol id="fun" viewBox="0 0 20 20"><path d="M1.500 2h17v3L12 11v8l-4-2v-6L1.500 5z" fill="#5485bb" stroke="#3a6596"/><path d="M1.500 1.500h17v2.500h-17z" fill="#ecd13e"/></symbol>
<symbol id="col" viewBox="0 0 20 20"><path d="M3 3h7M3 17h7M3 3v14" stroke="#999" stroke-width="1.500" fill="none"/><path d="M4 6h5v3H4zM4 12h5v4H4z" fill="#f0a52e"/><path d="M14 1l5.500 7H16v10h-4V8H8.500z" fill="#4a7cb4" stroke="#2d567f" stroke-width=".7"/></symbol>
<symbol id="exp" viewBox="0 0 20 20"><path d="M2 3h16M3 17h7M3 3v14" stroke="#999" stroke-width="1.500" fill="none"/><path d="M4 6h5v3H4zM4 12h5v4H4z" fill="#f0a52e"/><path d="M14 19l5.500-7H16V2h-4v10H8.500z" fill="#4a7cb4" stroke="#2d567f" stroke-width=".7"/></symbol>
<symbol id="inf" viewBox="0 0 20 20"><circle cx="10" cy="10" r="9" fill="#5c8cc2"/><path d="M11.500 4.500h.1M8.500 9h2.500L9 15h2.500" fill="none" stroke="#fff" stroke-width="2" stroke-linecap="round"/></symbol>
<symbol id="star" viewBox="0 0 20 20"><path d="M10 .8l2.500 6.700 7 .2-5.600 4.300 2 6.900L10 14.800l-5.900 4.100 2-6.900L.5 7.700l7-.2z" fill="#fcee5c" stroke="#c8a51c" stroke-width="1.100"/></symbol>
<symbol id="ph" viewBox="0 0 20 20"><path d="M1.500 18.500v-16h6l2 2h9v14z" fill="#a9cd4c" stroke="#8a9a70"/><path d="M3 6l12 12M3 14l5-4" stroke="#e8f1c8" stroke-width="2"/><path d="M13 13q-5-5-1-8 5-1 5 3 0 3-4 5z" fill="#1e7b22"/></symbol>
<symbol id="home" viewBox="0 0 20 20"><path d="M1.500 18.500v-16h6l2 2h9v14z" fill="#f0f0f0" stroke="#999"/><path d="M5 11l5-5 5 5M6.500 11v5h7v-5" fill="none" stroke="#444" stroke-width="1.300"/></symbol>
<symbol id="fold" viewBox="0 0 20 20"><path d="M1.500 18.500v-16h6l2 2h9v14z" fill="#f0f0f0" stroke="#999"/></symbol>
<symbol id="ms" viewBox="0 0 20 20"><path d="M1 1q10 0 18 5v5Q9 12 1 18q4-9 0-17z" fill="#5d8dc3" stroke="#2b4e78"/><path d="M6 2q3 7 0 13M10.500 3q2.500 5 0 9M15 4.500q1.500 4 0 7" stroke="#2b4e78" fill="none"/></symbol>
<symbol id="ora" viewBox="0 0 20 20"><rect x="1" y="3.500" width="18" height="13" rx="4.500" fill="#6d9bcf" stroke="#2b4766" stroke-width="1.700"/></symbol>
<symbol id="d2" viewBox="0 0 20 20"><rect width="20" height="19" rx="2" fill="#6592c7"/></symbol>
<symbol id="sty2" viewBox="0 0 20 20"><path d="M19 2l-8 8" stroke="#b5672e" stroke-width="3"/><path d="M1 8l6-2 6 5-3 7-7-4z" fill="#f0a93a"/><path d="M2.500 11l8-2" stroke="#d84b35" stroke-width="2.500"/></symbol>
<symbol id="grp" viewBox="0 0 20 20"><path d="M5 6h9v12H5zM8 6V2h9v13M2 9v9h3M11 9v6M8 12h6" fill="none" stroke="#777" stroke-width="1.300"/><use href="#bp"/></symbol>
<symbol id="eye" viewBox="0 0 20 20"><path d="M1 8q8-8 17 0-8 8-17 0z" fill="#eee" stroke="#777" stroke-width="1.200"/><circle cx="9.500" cy="8" r="3.500" fill="#4a75a5"/><path d="M11 13h9l-4.500 5z" fill="#333"/></symbol>
<symbol id="eps" viewBox="0 0 20 20"><path d="M9 2Q2 0 2 4q0 2 4 2.500Q1 7 1 10q0 4 8 2" fill="none" stroke="#6c3c70" stroke-width="1.700"/><path d="M11 18.500v-4q0-3 3-3t3 3v4" stroke="#888" fill="none" stroke-width="1.700"/></symbol>
<symbol id="tb" viewBox="0 0 20 20"><path d="M1 .8h18v18.400H1z" fill="#e2e2e2" stroke="#8a8a8a"/><path d="M1 5.500h18" stroke="#999"/><path d="M4 3.500h3M9 3.500h6M4 8.500h3.500M11 8.500h5M4 12h3.500M11 12h5M4 15.500h3.500M11 15.500h5" stroke="#777" stroke-width="1.300"/></symbol>
<symbol id="clk" viewBox="0 0 20 20"><circle cx="10" cy="10" r="8.800" fill="#f0f2f2" stroke="#7d8486" stroke-width="1.300"/><path d="M10 3v7l4 2.500" stroke="#7d8486" fill="none"/></symbol>
<symbol id="pmod" viewBox="0 0 20 20"><g stroke="#c8202a" stroke-width="2"><path d="M6.500 1v12M.5 7h12M2.500 3l8 8M10.500 3l-8 8"/></g><circle cx="6.500" cy="7" r="2" fill="#fff" stroke="#c8202a"/><circle cx="15" cy="11" r="3.700" fill="#999" stroke="#555"/><circle cx="9" cy="16" r="3" fill="#b6cde8"/><path d="M11 14h9l-4.500 5.500z" fill="#333"/></symbol>
<symbol id="rep" viewBox="0 0 20 20"><path d="M3.500 1.500h9l5 5v13h-14z" fill="#fafafa" stroke="#999"/><path d="M6 8h8M6 11h8M6 14h8M6 17h5" stroke="#aaa"/></symbol>
<symbol id="edi" viewBox="0 0 20 20"><path d="M1.500 2h14v12l-5 1H1.500z" fill="#f9e14d" stroke="#b9a11c"/><path d="M18 6l-5 9-3 3" stroke="#c9a23a" stroke-width="2.500" fill="none"/></symbol>
<symbol id="wre" viewBox="0 0 20 20"><path d="M11 11l7 7" stroke="#dcc06a" stroke-width="4"/><path d="M5 5l6 6" stroke="#888" stroke-width="2.500"/><path d="M5 1q5 1 4 6-2 3-6 0L1 4.500l3 1z" fill="#ddd" stroke="#777"/></symbol>
<symbol id="srch" viewBox="0 0 20 20"><circle cx="8.500" cy="8.500" r="6.500" fill="none" stroke="#888" stroke-width="1.500"/><path d="M13 13l6 6" stroke="#888" stroke-width="2"/></symbol>
<symbol id="grid" viewBox="0 0 20 20"><path d="M4 0v20M10.500 0v20M17 0v20M0 3.500h20M0 10h20M0 16.500h20" stroke="#5585ad" stroke-width="1.400"/></symbol>
<symbol id="rnd" viewBox="0 0 20 20"><path d="M1 2h18M1 19h18M1 6h1M5 7h2M18 6h1M11 6h2M8 10h2M15 10h2M3 12h2M10 14h2M16 15h2M1 15h2" stroke="#66706a" stroke-width="1.600" stroke-dasharray="1.600 2"/></symbol>
<symbol id="rpo" viewBox="0 0 20 20"><path d="M1 9q1-5 6-3t7-.5 5 3.500-4 4-5-1-6 1-3-4z" fill="#eee" stroke="#777" stroke-width="1.300"/><path d="M4 8h2M9 10h2M14 8h2M5 11h1M15 11h1" stroke="#555" stroke-width="1.500"/></symbol>
<symbol id="reg" viewBox="0 0 20 20"><path d="M2 2.500h17M2 6h17M2 9.500h17M2 13h17M2 16.500h17" stroke="#4e5850" stroke-width="1.600" stroke-dasharray="1.600 2.100"/></symbol>
<symbol id="lock" viewBox="0 0 20 20"><path d="M5 9V6q0-4.500 5-4.500T15 6v3" fill="none" stroke="#888" stroke-width="2.200"/><path d="M2.500 9h15v10.500h-15z" fill="#555" stroke="#444"/></symbol>
<symbol id="mous" viewBox="0 0 20 20"><path d="M2 5q0-4 5-2l9 8q4 4 0 7t-7 0z" fill="#fff" stroke="#111" stroke-width="1.700"/><path d="M5 9l6-5M8 12.500l6-5M5 3l5 8M12 12l2 4M15 5l4-4M17 9h3M11 3l1-3" stroke="#111" stroke-width="1.500"/></symbol>
<symbol id="epsg" viewBox="0 0 20 20"><ellipse cx="10" cy="9.500" rx="9.500" ry="7" fill="#bbb" stroke="#666"/><path d="M1 9.500h18M3 5.500h14M3 13.500h14M10 1v18M6 3q-3 6 0 13M14 3q3 6 0 13" stroke="#666" fill="none"/></symbol>
<symbol id="msg" viewBox="0 0 20 20"><path d="M10 2q9 0 9 7 0 4-4 6l2 4-6-3Q1 16 1 9t9-7z" fill="#555"/><circle cx="5.500" cy="9" r="1.500" fill="#ddd"/><circle cx="10" cy="9" r="1.500" fill="#ddd"/><circle cx="14.500" cy="9" r="1.500" fill="#ddd"/></symbol>
</svg>

<header class="title"><svg class="ic"><use href="#qgis"/></svg><span>*QGIS-harjoitus 3 - QGIS</span>
<div class="wb"><svg viewBox="0 0 12 12"><path d="M.5 6.500h10"/></svg><svg viewBox="0 0 12 12"><path d="M1 3.500h7.500V11H1zM3 3V1h8v8H9" stroke-width="1.500"/></svg><svg viewBox="0 0 12 12"><path d="M1 1l10 10M11 1L1 11"/></svg></div></header>
<nav class="menu"><span>Pro<u>j</u>ekti</span><span><u>M</u>uokkaa</span><span><u>N</u>äytä</span><span><u>T</u>asot</span><span><u>A</u>setukset</span><span><u>L</u>isäosat</span><span>Vekt<u>o</u>ri</span><span><u>R</u>asteri</span><span><u>T</u>ietokanta</span><span><u>V</u>erkko</span><span><u>M</u>esh</span><span>Prosessointi</span><span><u>O</u>hje</span></nav>

<div class="bar"><i class="grip g0"></i><svg class="b"><use href="#new"/></svg><svg class="b"><use href="#open"/></svg><svg class="b"><use href="#save"/></svg><svg class="b"><use href="#lay"/></svg><svg class="b"><use href="#man"/></svg><svg class="b" viewBox="0 0 20 20"><use href="#sty"/><text x="12" y="18.500" class="t11">a</text></svg><i class="grip"></i><svg class="b"><use href="#hand"/></svg><svg class="b"><use href="#panto"/></svg><svg class="b"><use href="#zin"/></svg><svg class="b"><use href="#zout"/></svg><svg class="b"><use href="#zful"/></svg><svg class="b"><use href="#zsel"/></svg><svg class="b"><use href="#zlay"/></svg><svg class="b off" viewBox="0 0 20 20"><use href="#zlay"/><text x="8" y="10" class="t7">1:1</text></svg><svg class="b"><use href="#zlast"/></svg><svg class="b off"><use href="#znext"/></svg><svg class="b"><use href="#nmap"/></svg><svg class="b"><use href="#nbm"/></svg><svg class="b"><use href="#bms"/></svg><svg class="b"><use href="#ref"/></svg><i class="grip"></i><svg class="b"><use href="#iden"/></svg><svg class="b off"><use href="#act"/></svg><i class="dd off2"></i><svg class="b"><use href="#selr"/></svg><i class="dd"></i><svg class="b"><use href="#inv"/></svg><i class="dd"></i><svg class="b"><use href="#desl"/></svg><svg class="b"><use href="#tabl"/></svg><svg class="b"><use href="#abac"/></svg><svg class="b on"><use href="#gear"/></svg><svg class="b"><use href="#sig"/></svg><svg class="b"><use href="#rul"/></svg><i class="dd"></i><svg class="b"><use href="#tip"/></svg><svg class="b"><use href="#txt"/></svg><i class="dd"></i></div>

<div class="bar"><i class="grip g0"></i><svg class="b"><use href="#dsm"/></svg><svg class="b"><use href="#gpks"/></svg><svg class="b"><use href="#vees"/></svg><svg class="b"><use href="#feas"/></svg><svg class="b"><use href="#mem"/></svg><i class="sep"></i><svg class="b"><use href="#virs"/></svg><i class="grip"></i><svg class="b off"><use href="#pens"/></svg><svg class="b"><use href="#pen"/></svg><svg class="b off"><use href="#svl"/></svg><svg class="b off"><use href="#blbs"/></svg><svg class="b off"><use href="#vtx"/></svg><i class="dd off2"></i><svg class="b off"><use href="#mod"/></svg><svg class="b off"><use href="#tra"/></svg><svg class="b off"><use href="#cut"/></svg><svg class="b off"><use href="#cpy"/></svg><svg class="b off"><use href="#pst"/></svg><svg class="b off"><use href="#und"/></svg><svg class="b off"><use href="#red"/></svg><i class="grip"></i><svg class="b" viewBox="0 0 20 20"><use href="#laby"/><text x="4.200" y="10.500" class="tl">abc</text></svg><svg class="b"><use href="#dia"/></svg><i class="sep"></i><svg class="b" viewBox="0 0 20 20"><use href="#labp"/><text x="4.200" y="10.500" class="tl">ab</text></svg><svg class="b" viewBox="0 0 20 20"><use href="#labr"/><text x="4.200" y="10.500" class="tl r">abc</text></svg><i class="sep"></i><svg class="b off"><use href="#lg1"/></svg><svg class="b off"><use href="#lg2"/></svg><svg class="b off"><use href="#lg3"/></svg><svg class="b off"><use href="#lg4"/></svg><svg class="b off"><use href="#lg5"/></svg><i class="grip"></i><svg class="b"><use href="#plug"/></svg><svg class="b"><use href="#wd"/></svg><svg class="b"><use href="#pic"/></svg><svg class="b"><use href="#dbd"/></svg><svg class="b off"><use href="#dbu"/></svg><svg class="b"><use href="#db"/></svg><i class="grip"></i><svg class="b"><use href="#grs"/></svg><svg class="b"><use href="#wg1"/></svg><svg class="b"><use href="#wg2"/></svg><svg class="b"><use href="#wg3"/></svg><i class="grip"></i><svg class="b"><use href="#pyc"/></svg><svg class="b"><use href="#moon"/></svg><i class="grip"></i><svg class="b" viewBox="0 0 20 20"><use href="#help"/><text x="8.500" y="14.500" class="th">?</text></svg><i class="grip"></i><svg class="b"><use href="#crs"/></svg><svg class="b"><use href="#sat"/></svg><svg class="b"><use href="#topo"/></svg></div>

<div class="bar"><i class="grip g0"></i><svg class="b off"><use href="#tri"/></svg><svg class="b off"><use href="#b1"/></svg><i class="dd off2"></i><svg class="b off"><use href="#b2"/></svg><svg class="b off"><use href="#b3"/></svg><svg class="b off"><use href="#b4"/></svg><svg class="b off"><use href="#b5"/></svg><svg class="b off"><use href="#b6"/></svg><svg class="b off"><use href="#b7"/></svg><svg class="b off"><use href="#b8"/></svg><svg class="b off"><use href="#b9"/></svg><svg class="b off"><use href="#b10"/></svg><svg class="b off"><use href="#b11"/></svg><svg class="b off"><use href="#b12"/></svg><svg class="b off"><use href="#b13"/></svg><svg class="b off"><use href="#b13"/></svg><svg class="b off"><use href="#b14"/></svg><svg class="b off"><use href="#b15"/></svg><svg class="b off"><use href="#b16"/></svg><i class="dd off2"></i><i class="grip"></i><svg class="b off"><use href="#h1"/></svg><svg class="b off"><use href="#h2"/></svg><svg class="b off"><use href="#h1"/></svg><svg class="b off"><use href="#h2"/></svg><svg class="b off"><use href="#sn1"/></svg><svg class="b off"><use href="#sn2"/></svg><svg class="b off"><use href="#co1"/></svg><svg class="b off"><use href="#co2"/></svg><svg class="b"><use href="#hash"/></svg>
<div class="snap"><i class="grip"></i><svg class="b"><use href="#mgn"/></svg><svg class="b off"><use href="#snv"/></svg><svg class="b off"><use href="#snp"/></svg><div class="spin dis"><span>12</span><b></b></div><div class="combo"><span>px</span><i class="dd off2"></i></div><svg class="b"><use href="#tre"/></svg><svg class="b off"><use href="#xx"/></svg><div class="press"><svg class="b off"><use href="#trc"/></svg><i class="dd off2"></i></div></div></div>

<div class="bar last"><i class="grip g0"></i><svg class="b off"><use href="#s1"/></svg><i class="dd off2"></i><svg class="b off"><use href="#s2"/></svg><i class="dd off2"></i><svg class="b off"><use href="#s3"/></svg><i class="dd off2"></i><svg class="b off"><use href="#s4"/></svg><i class="dd off2"></i><svg class="b off"><use href="#s5"/></svg><i class="dd off2"></i><i class="grip"></i><svg class="b"><use href="#plot"/></svg></div>

<main>
<aside class="side"><i class="hgrip"></i><div><svg><use href="#veep"/></svg></div><div><svg><use href="#ras"/></svg></div><div><svg><use href="#msh"/></svg></div><div><svg><use href="#com"/></svg></div><div><svg><use href="#feap"/></svg></div><div><svg><use href="#virp"/></svg></div><div><svg><use href="#pgp"/></svg><i class="dd"></i></div><div><svg><use href="#glop"/></svg><i class="dd"></i></div><div><svg><use href="#wcp"/></svg></div><div><svg><use href="#wfp"/></svg><i class="dd"></i></div><div><svg><use href="#gpks"/></svg><i class="dd"></i></div><div class="sh"><svg><use href="#sats"/></svg></div></aside>

<section class="left">
<div class="dock d1">
<h2>Selain<span class="wn"><svg viewBox="0 0 10 10"><path d="M2.500 4.500h3v3h-3zM4.500 4.500v-2h3v3h-2"/></svg><svg viewBox="0 0 10 10"><path d="M2.500 2.500l5 5M7.500 2.500l-5 5" stroke-width="1.500"/></svg></span></h2>
<div class="dt"><svg><use href="#addl"/></svg><svg><use href="#ref"/></svg><svg><use href="#fun"/></svg><svg><use href="#col"/></svg><svg><use href="#inf"/></svg></div>
<div class="tree"><ul>
<li><i class="ar"></i><svg><use href="#star"/></svg>Suosikit</li>
<li><i class="ar"></i><svg><use href="#bms"/></svg>Sijaintikirjanmerkit</li>
<li><i class="ar"></i><svg><use href="#ph"/></svg>Project Home</li>
<li><i class="ar"></i><svg><use href="#home"/></svg>Koti</li>
<li><i class="ar"></i><svg><use href="#fold"/></svg>C:\</li>
<li><i class="ar"></i><svg><use href="#gpk"/></svg>GeoPackage</li>
<li><i></i><svg><use href="#fea"/></svg>SpatiaLite</li>
<li><i></i><svg><use href="#pg"/></svg>PostGIS</li>
<li><i></i><svg><use href="#ms"/></svg>MSSQL</li>
<li><i></i><svg><use href="#ora"/></svg>Oracle</li>
<li><i></i><svg viewBox="0 0 20 20"><use href="#d2"/><text x="1.500" y="12.500" class="td">DB2</text></svg>DB2</li>
<li><i></i><svg><use href="#glo"/></svg>WMS/WMTS</li>
<li><i class="ar"></i><svg><use href="#glo"/></svg>XYZ Tiles</li>
<li><i></i><svg><use href="#wc"/></svg>WCS</li>
<li><i class="ar"></i><svg><use href="#wf"/></svg>WFS</li>
<li><i class="ar"></i><svg><use href="#ow"/></svg>OWS</li>
</ul><div class="sb"><b class="u"></b><em class="th1"></em><b class="d"></b></div></div>
</div>
<i class="split"></i>
<div class="dock d2">
<h2>Tasot<span class="wn"><svg viewBox="0 0 10 10"><path d="M2.500 4.500h3v3h-3zM4.500 4.500v-2h3v3h-2"/></svg><svg viewBox="0 0 10 10"><path d="M2.500 2.500l5 5M7.500 2.500l-5 5" stroke-width="1.500"/></svg></span></h2>
<div class="dt"><svg><use href="#sty2"/></svg><svg><use href="#grp"/></svg><svg><use href="#eye"/></svg><svg><use href="#fun"/></svg><svg class="ep"><use href="#eps"/></svg><i class="dd"></i><svg><use href="#exp"/></svg><svg><use href="#col"/></svg><svg><use href="#reml"/></svg></div>
<div class="tree"><ul class="lay">
<li class="sel"><i></i><svg class="ck" viewBox="0 0 13 13"><path d="M3 6l2.500 4L10 2.500"/></svg><em class="sw"></em><u>loppi</u></li>
<li><i></i><svg><use href="#tb"/></svg>luokitus_taso_3</li>
<li><i></i><svg><use href="#tb"/></svg>luokitus_taso_2</li>
<li><i></i><svg><use href="#tb"/></svg>luokitus_taso_1</li>
<li><i class="ar"></i><svg class="ck" viewBox="0 0 13 13"><path d="M3 6l2.500 4L10 2.500"/></svg><svg class="os"><use href="#osm"/></svg>OpenStreetMap</li>
</ul></div>
</div>
</section>

<section class="map"><svg viewBox="330 176 778 654"><rect x="374.300" y="214.300" width="632.400" height="551.300" fill="#ff9b9b" stroke="#ff5f5f" stroke-width="1.300"/><polygon fill="#ab6f38" stroke="#7c1420" stroke-width="1.100" points="418.500,355 428.700,298.500 434.500,295.200 458.700,310 465.700,291 492.700,252.300 533.500,252 567.700,267.500 597,315 620.300,297.700 634,295.300 647,302.200 667.500,303 719,376.200 732,372.300 741,346.800 749,343.300 755.500,349.500 751.800,367.300 798,395.700 809.800,380 824.300,391 857,363.300 912,380 913.300,338.700 938.300,360 953.300,351.700 969.500,390 965.500,435.300 893.300,490.300 904.300,505.500 898.500,523.700 900,535.500 855.300,586.300 850.500,647 861.700,676.500 835.500,721.300 727,730 706.800,686 718,660 697.500,640.500 665.700,623 628,665.500 617,670 626,693.500 608.700,702.700 567,638 570.700,608.700 517.700,589 483,596 458.500,584.700 440,585.300 408.500,559"/></svg></section>

<section class="right">
<h2>Prosessointityökalut<span class="wn"><svg viewBox="0 0 10 10"><path d="M2.500 4.500h3v3h-3zM4.500 4.500v-2h3v3h-2"/></svg><svg viewBox="0 0 10 10"><path d="M2.500 2.500l5 5M7.500 2.500l-5 5" stroke-width="1.500"/></svg></span></h2>
<div class="dt"><svg><use href="#pmod"/></svg><svg><use href="#pyd"/></svg><svg><use href="#clk"/></svg><svg><use href="#rep"/></svg><i class="sep"></i><svg><use href="#edi"/></svg><i class="sep"></i><svg><use href="#wre"/></svg></div>
<div class="search"><svg><use href="#srch"/></svg>Etsi...</div>
<div class="tree"><ul>
<li><i class="ar"></i><svg><use href="#clk"/></svg>Viimeksi käytetyt</li>
<li><i class="ar"></i><svg><use href="#qgis"/></svg>Grafiikka</li>
<li><i class="ar"></i><svg><use href="#qgis"/></svg>Interpolointi</li>
<li><i class="ar"></i><svg><use href="#qgis"/></svg>Kartografia</li>
<li><i class="ar"></i><svg><use href="#qgis"/></svg>Rasterianalyysi</li>
<li><i class="ar"></i><svg><use href="#qgis"/></svg>Rasterimuotoinen maastoanalyysi</li>
<li><i class="ar"></i><svg><use href="#qgis"/></svg>Rasterityökalut</li>
<li><i class="ar"></i><svg><use href="#qgis"/></svg>Tasotyökalut</li>
<li><i class="ar"></i><svg><use href="#qgis"/></svg>Tiedostotyökalut</li>
<li><i class="ar"></i><svg><use href="#qgis"/></svg>Tietokanta</li>
<li><i class="ar"></i><svg><use href="#qgis"/></svg>Vektorianalyysi</li>
<li><i class="ar"></i><svg><use href="#qgis"/></svg>Vektorigeometria</li>
<li><i class="ar"></i><svg><use href="#qgis"/></svg>Vektoritaulu</li>
<li><i class="ar dn"></i><svg><use href="#qgis"/></svg>Vektoritiedon luonti</li>
<li class="c"><svg><use href="#gear"/></svg>Array of offset (parallel) lines</li>
<li class="c"><svg><use href="#gear"/></svg>Array of translated features</li>
<li class="c"><svg><use href="#gear"/></svg>Import geotagged photos</li>
<li class="c"><svg><use href="#gear"/></svg>Luo pisteitä rasterin solujen keskipisteistä polygonien sisään</li>
<li class="c"><svg><use href="#gear"/></svg>Luo pisteitä rasterin solujen keskipisteistä viivan varrelle</li>
<li class="c"><svg><use href="#gear"/></svg>Luo pistetaso taulusta</li>
<li class="c sel"><svg><use href="#grid"/></svg>Luo ruudukko</li>
<li class="c"><svg><use href="#gear"/></svg>Pisteistä viiva</li>
<li class="c"><svg><use href="#gear"/></svg>Raster pixels to points</li>
<li class="c"><svg><use href="#gear"/></svg>Rasteripikselit polygoneiksi</li>
<li class="c"><svg><use href="#rnd"/></svg>Satunnaiset pisteet alueella</li>
<li class="c"><svg><use href="#rpo"/></svg>Satunnaiset pisteet polygonien sisällä</li>
<li class="c"><svg><use href="#rnd"/></svg>Satunnaiset pisteet tason alueella</li>
<li class="c"><svg><use href="#gear"/></svg>Satunnaiset pisteet viivan varrella</li>
<li class="c"><svg><use href="#reg"/></svg>Vakiopisteet</li>
<li><i class="ar"></i><svg><use href="#qgis"/></svg>Vektoritiedon päällekkäisanalyysit</li>
<li><i class="ar"></i><svg><use href="#qgis"/></svg>Vektoritiedosta poiminta</li>
</ul><div class="sb"><b class="u"></b><em class="th2"></em><b class="d"></b></div></div>
<div class="tabs"><span class="act">Prosessointityö...</span><span>Kuvaustekn...</span><span>Tasojen piirtojärj...</span><span>Til...</span><span>Laajennettu digit...</span></div>
</section>
</main>

<footer><div class="loc"></div><span class="k">Koordinaatit</span><div class="in co">376499,6713465</div><svg class="f1"><use href="#mous"/></svg><span class="m">Mittakaava</span><div class="combo sc"><span>1:250000</span><i class="dd"></i></div><svg class="f2"><use href="#lock"/></svg><span class="su">Suurennus</span><div class="spin s1"><span>100%</span><b></b></div><span class="ki">Kierto</span><div class="spin s2"><span>0,0 °</span><b></b></div><svg class="ck" viewBox="0 0 13 13"><path d="M3 6l2.500 4L10 2.500"/></svg><span class="pi">Piirrä</span><svg class="f3"><use href="#epsg"/></svg><span class="ep">EPSG:3067</span><svg class="f4"><use href="#msg"/></svg></footer>
<div class="pop"><svg><use href="#qgis"/></svg><span>Luo ruudukko</span><svg class="x" viewBox="0 0 12 12"><path d="M1 1l10 10M11 1L1 11"/></svg></div>
</body>
</html>
```
FILE: styles.css
```css
* { box-sizing: border-box; }
body { margin: 0; width: 1600px; height: 858px; overflow: hidden; background: #efefef; color: #1c1c1c; font: 12px/18px "Open Sans", "Noto Sans", sans-serif; display: flex; flex-direction: column; position: relative; }
svg { flex: none; display: block; }
i { font-style: normal; flex: none; }
.defs { position: absolute; }
svg text { font-family: "Open Sans", sans-serif; letter-spacing: 0; }
.t11 { font-size: 10px; fill: #333; }
.t7 { font-size: 7px; fill: #333; }
.tl { font-size: 7.5px; font-weight: 700; fill: #222; }
.tl.r { fill: #d22; }
.th { font-size: 13px; fill: #fff; }
.td { font-size: 8px; font-weight: 600; fill: #fff; }

.title { height: 24px; flex: none; background: #444; border-bottom: 1px solid #111; color: #fff; display: flex; align-items: center; letter-spacing: -.12px; }
.title span { padding-top: 1px; }
.title .ic { width: 17px; height: 17px; margin: 0 4px 0 2px; }
.wb { margin-left: auto; display: flex; gap: 37px; padding-right: 20px; }
.wb svg { width: 12px; height: 12px; fill: none; stroke: #fff; stroke-width: 1.1; }
.menu { height: 21px; flex: none; display: flex; align-items: center; padding: 2px 0 0 9px; border-bottom: 1px solid #d2d2d2; letter-spacing: -.29px; }
.menu span { margin-right: 13px; white-space: nowrap; }
.menu u { text-underline-offset: 2px; }

.bar { height: 32.5px; flex: none; display: flex; align-items: center; border-top: 1px solid #fff; border-bottom: 1px solid #cfcfcf; background: linear-gradient(#fafafa, #eee); }
.bar.last { height: 31.5px; border-bottom-color: #bdbdbd; }
.b { width: 27.45px; height: 20px; flex: none; }
.b.off { filter: grayscale(.75) opacity(.36); }
.b.on { height: 27px; padding: 3px 0; border: 1px solid #b4b4b4; border-radius: 2px; background: #dcdcdc; }
.grip { width: 15.6px; height: 15px; flex: none; background: radial-gradient(circle, #bbb 0.8px, transparent 1px) 6px 0 / 3px 3px; clip-path: inset(0 3px 0 6px); }
.grip.g0 { width: 11.75px; clip-path: inset(0 3px 0 3px); }
.sep { width: 4.5px; height: 16px; border-left: 1px solid #ccc; margin-left: 2px; }
.dd { width: 12.6px; height: 5px; background: #4c4c4c; clip-path: polygon(3px 0, 10.5px 0, 6.7px 4.5px); }
.off2 { background: #9a9a9a; }
.snap { display: flex; align-items: center; margin-left: auto; padding-right: 139px; }
.spin, .combo, .in { height: 19px; background: #fff; border: 1px solid #b5b5b5; border-radius: 2px; display: flex; align-items: center; white-space: nowrap; padding-left: 4px; }
.spin span, .combo span { flex: 1; }
.spin b { width: 14px; height: 17px; border-left: 1px solid #c4c4c4; display: flex; flex-direction: column; align-items: center; justify-content: center; gap: 3px; background: #f6f6f6; }
.spin b::before, .spin b::after { content: ""; width: 7px; height: 4px; background: #555; clip-path: polygon(0 100%, 100% 100%, 50% 0); }
.spin b::after { clip-path: polygon(0 0, 100% 0, 50% 100%); }
.spin.dis b::before, .spin.dis b::after { background: #999; }
.dis { width: 76px; margin: 0 1px 0 0; background: #efefef; color: #777; }
.snap .combo { width: 84px; background: #f8f8f8; color: #777; padding-right: 5px; }
.press { display: flex; align-items: center; height: 27px; background: linear-gradient(90deg, #dadada 26px, #b9b9b9 26px, #b9b9b9 27px, #dadada 27px); border: 1px solid #b9b9b9; border-radius: 2px; }
.press .b { height: 25px; padding: 2px 0; }

main { height: 657.5px; flex: none; display: flex; padding-top: 1px; }
.side { width: 46px; flex: none; border-right: 1px solid #bdbdbd; background: linear-gradient(90deg, #fafafa, #eee); padding-top: 6px; }
.hgrip { display: block; width: 15px; height: 5px; margin: 0 0 0 16px; background: radial-gradient(circle, #bbb 0.8px, transparent 1px) 0 0 / 3px 3px; }
.side div { height: 26.65px; display: flex; align-items: center; padding-left: 7px; padding-top: 2px; }
.side .sh { padding-left: 13px; }
.side svg { width: 20px; height: 20px; margin-right: 3px; }
.left { width: 277px; flex: none; display: flex; flex-direction: column; }
.dock { display: flex; flex-direction: column; }
.d1 { height: 333px; }
.d2 { flex: 1; min-height: 0; }
.split { height: 6px; background: radial-gradient(circle, #c4c4c4 .8px, transparent 1px) 50% 1px / 3px 3px; width: 14px; margin-left: 132px; }
h2 { margin: 0; font-size: 12px; font-weight: 400; height: 18px; line-height: 18px; padding-left: 3px; display: flex; align-items: center; flex: none; letter-spacing: -.1px; }
.wn { margin-left: auto; display: flex; gap: 2px; padding: 0 1px 1px 0; }
.wn svg { width: 10px; height: 10px; border: 1px solid #777; border-radius: 2px; fill: none; stroke: #444; stroke-width: 1; }
.dt { height: 23px; flex: none; display: flex; align-items: center; padding: 0 0 3px 6px; }
.dt svg { width: 14px; height: 14px; margin-right: 7px; }
.dt .ep { margin-right: 2px; }
.dt .dd { margin-right: 4px; }
.d2 .dt { padding-bottom: 2px; }
.tree { flex: 1; min-height: 0; background: #fff; border: 1px solid #b9b9b9; display: flex; overflow: hidden; }
ul { list-style: none; margin: 0; padding: 1.5px 0 0; flex: 1; letter-spacing: -.02px; }
li { height: 18.33px; display: flex; align-items: center; white-space: nowrap; }
li > i { width: 23px; height: 8px; }
.ar { background: #555; clip-path: polygon(8px 0, 12px 4px, 8px 8px); }
.ar.dn { clip-path: polygon(6px 2px, 14px 2px, 10px 6.500px); }
li svg { width: 16px; height: 16px; margin-right: 5.5px; }
.sb { width: 14px; border-left: 1px solid #c4c4c4; display: flex; flex-direction: column; background: #e2e2e2; flex: none; }
.sb b { height: 14px; background: #fbfbfb; flex: none; border-bottom: 1px solid #c4c4c4; }
.sb b.d { margin-top: auto; border: 0; border-top: 1px solid #c4c4c4; }
.sb b::after { content: ""; display: block; margin: 5px 0 0 2.500px; width: 8px; height: 4px; background: #555; clip-path: polygon(0 100%, 100% 100%, 50% 0); }
.sb b.d::after { clip-path: polygon(0 0, 100% 0, 50% 100%); }
.sb em { background: linear-gradient(90deg, #fff, #f0f0f0); border-bottom: 1px solid #bbb; flex: none; }
.th1 { height: 206px; }
.th2 { height: 426px; }
.lay { font-weight: 700; letter-spacing: -.2px; }
.lay li::after { content: ""; width: 4px; height: 15px; background: #e4e4e4; margin-left: auto; }
.sel { background: #efefef; }
.ck { width: 13px; height: 13px; background: #fff; border: 1px solid #bbb; fill: none; stroke: #111; stroke-width: 1.800; margin-right: 5px; }
li .ck { width: 14px; height: 14px; margin-right: 5px; }
.sw { width: 16px; height: 16px; background: #52a383; border: 1px solid #2c6650; margin-right: 5px; }
li .os { width: 14px; height: 14px; margin: 0 6px 0 1.5px; }
.map { width: 780px; flex: none; margin-left: 6px; background: #fff; border: 1px solid #b9b9b9; }
.map svg { width: 778px; height: 654px; }
.right { width: 485px; flex: none; margin-left: 6px; display: flex; flex-direction: column; }
.right h2 { padding-left: 3px; padding-right: 1px; }
.right .dt .sep { margin: 0 7px 0 -1px; width: 1px; height: 10px; }
.search { height: 20px; flex: none; background: #fff; border: 1px solid #b0b0b0; border-radius: 2px; display: flex; align-items: center; font-style: italic; color: #aaa; padding: 1px 0 0 6px; letter-spacing: -.2px; }
.search svg { width: 11px; height: 11px; margin-right: 7px; }
.right ul { letter-spacing: -.11px; }
.right li > i { width: 23.5px; }
.right li svg { margin-right: 5.5px; }
.right .c { padding-left: 44.5px; }
.tabs { height: 25px; flex: none; display: flex; font-size: 10.5px; letter-spacing: -.2px; }
.tabs span { background: #dcdcdc; border: 1px solid #c0c0c0; border-top: 0; border-left: 0; height: 24px; line-height: 22px; text-align: center; flex: none; width: 89.500px; white-space: nowrap; }
.tabs .act { width: 108.500px; height: 25px; line-height: 23px; background: #f6f6f6; }
.tabs span:nth-child(3) { width: 122px; }
.tabs span:nth-child(4) { width: 51px; }
.tabs span:nth-child(5) { width: 114px; }

footer { flex: 1; display: flex; align-items: center; font-size: 11px; white-space: nowrap; }
footer > span { font-size: 10.5px; letter-spacing: -.3px; flex: none; }
footer > div { flex: none; }
.loc { width: 167px; height: 20px; margin-left: 3px; border: 1px solid #b5b5b5; border-radius: 2px; background: #fff; }
footer .k { width: 60px; margin-left: 662px; }
footer .co { width: 92px; }
footer .f1 { width: 16px; height: 16px; margin: 0 12px 0 3px; }
footer .m { width: 53px; }
footer .sc { width: 77px; padding-right: 5px; padding-left: 3px; }
footer .f2 { width: 15px; height: 16px; margin: 0 7px 0 10px; }
footer .su { width: 53px; }
footer .s1 { width: 77px; }
footer .ki { width: 35px; margin-left: 8px; }
footer .s2 { width: 74px; }
footer .ck { margin: 0 6px 0 5px; width: 14px; height: 14px; }
footer .pi { width: 39px; letter-spacing: 0; }
footer .ep { font-size: 11px; letter-spacing: -.15px; }
footer .f3 { width: 16px; height: 16px; margin-right: 4px; }
footer .f4 { width: 17px; height: 17px; margin-left: auto; margin-right: 6px; }
.pop { position: absolute; left: 7px; bottom: 0; width: 151px; height: 28px; background: #fff; border: 1px solid #bbb; border-bottom: 0; box-shadow: 0 0 6px rgba(0,0,0,.4); display: flex; align-items: center; color: #888; padding-left: 7px; letter-spacing: -.3px; }
.pop svg { width: 17px; height: 17px; margin-right: 4px; }
.pop .x { width: 11px; height: 11px; margin: 0 11px 0 auto; fill: none; stroke: #888; }
```
